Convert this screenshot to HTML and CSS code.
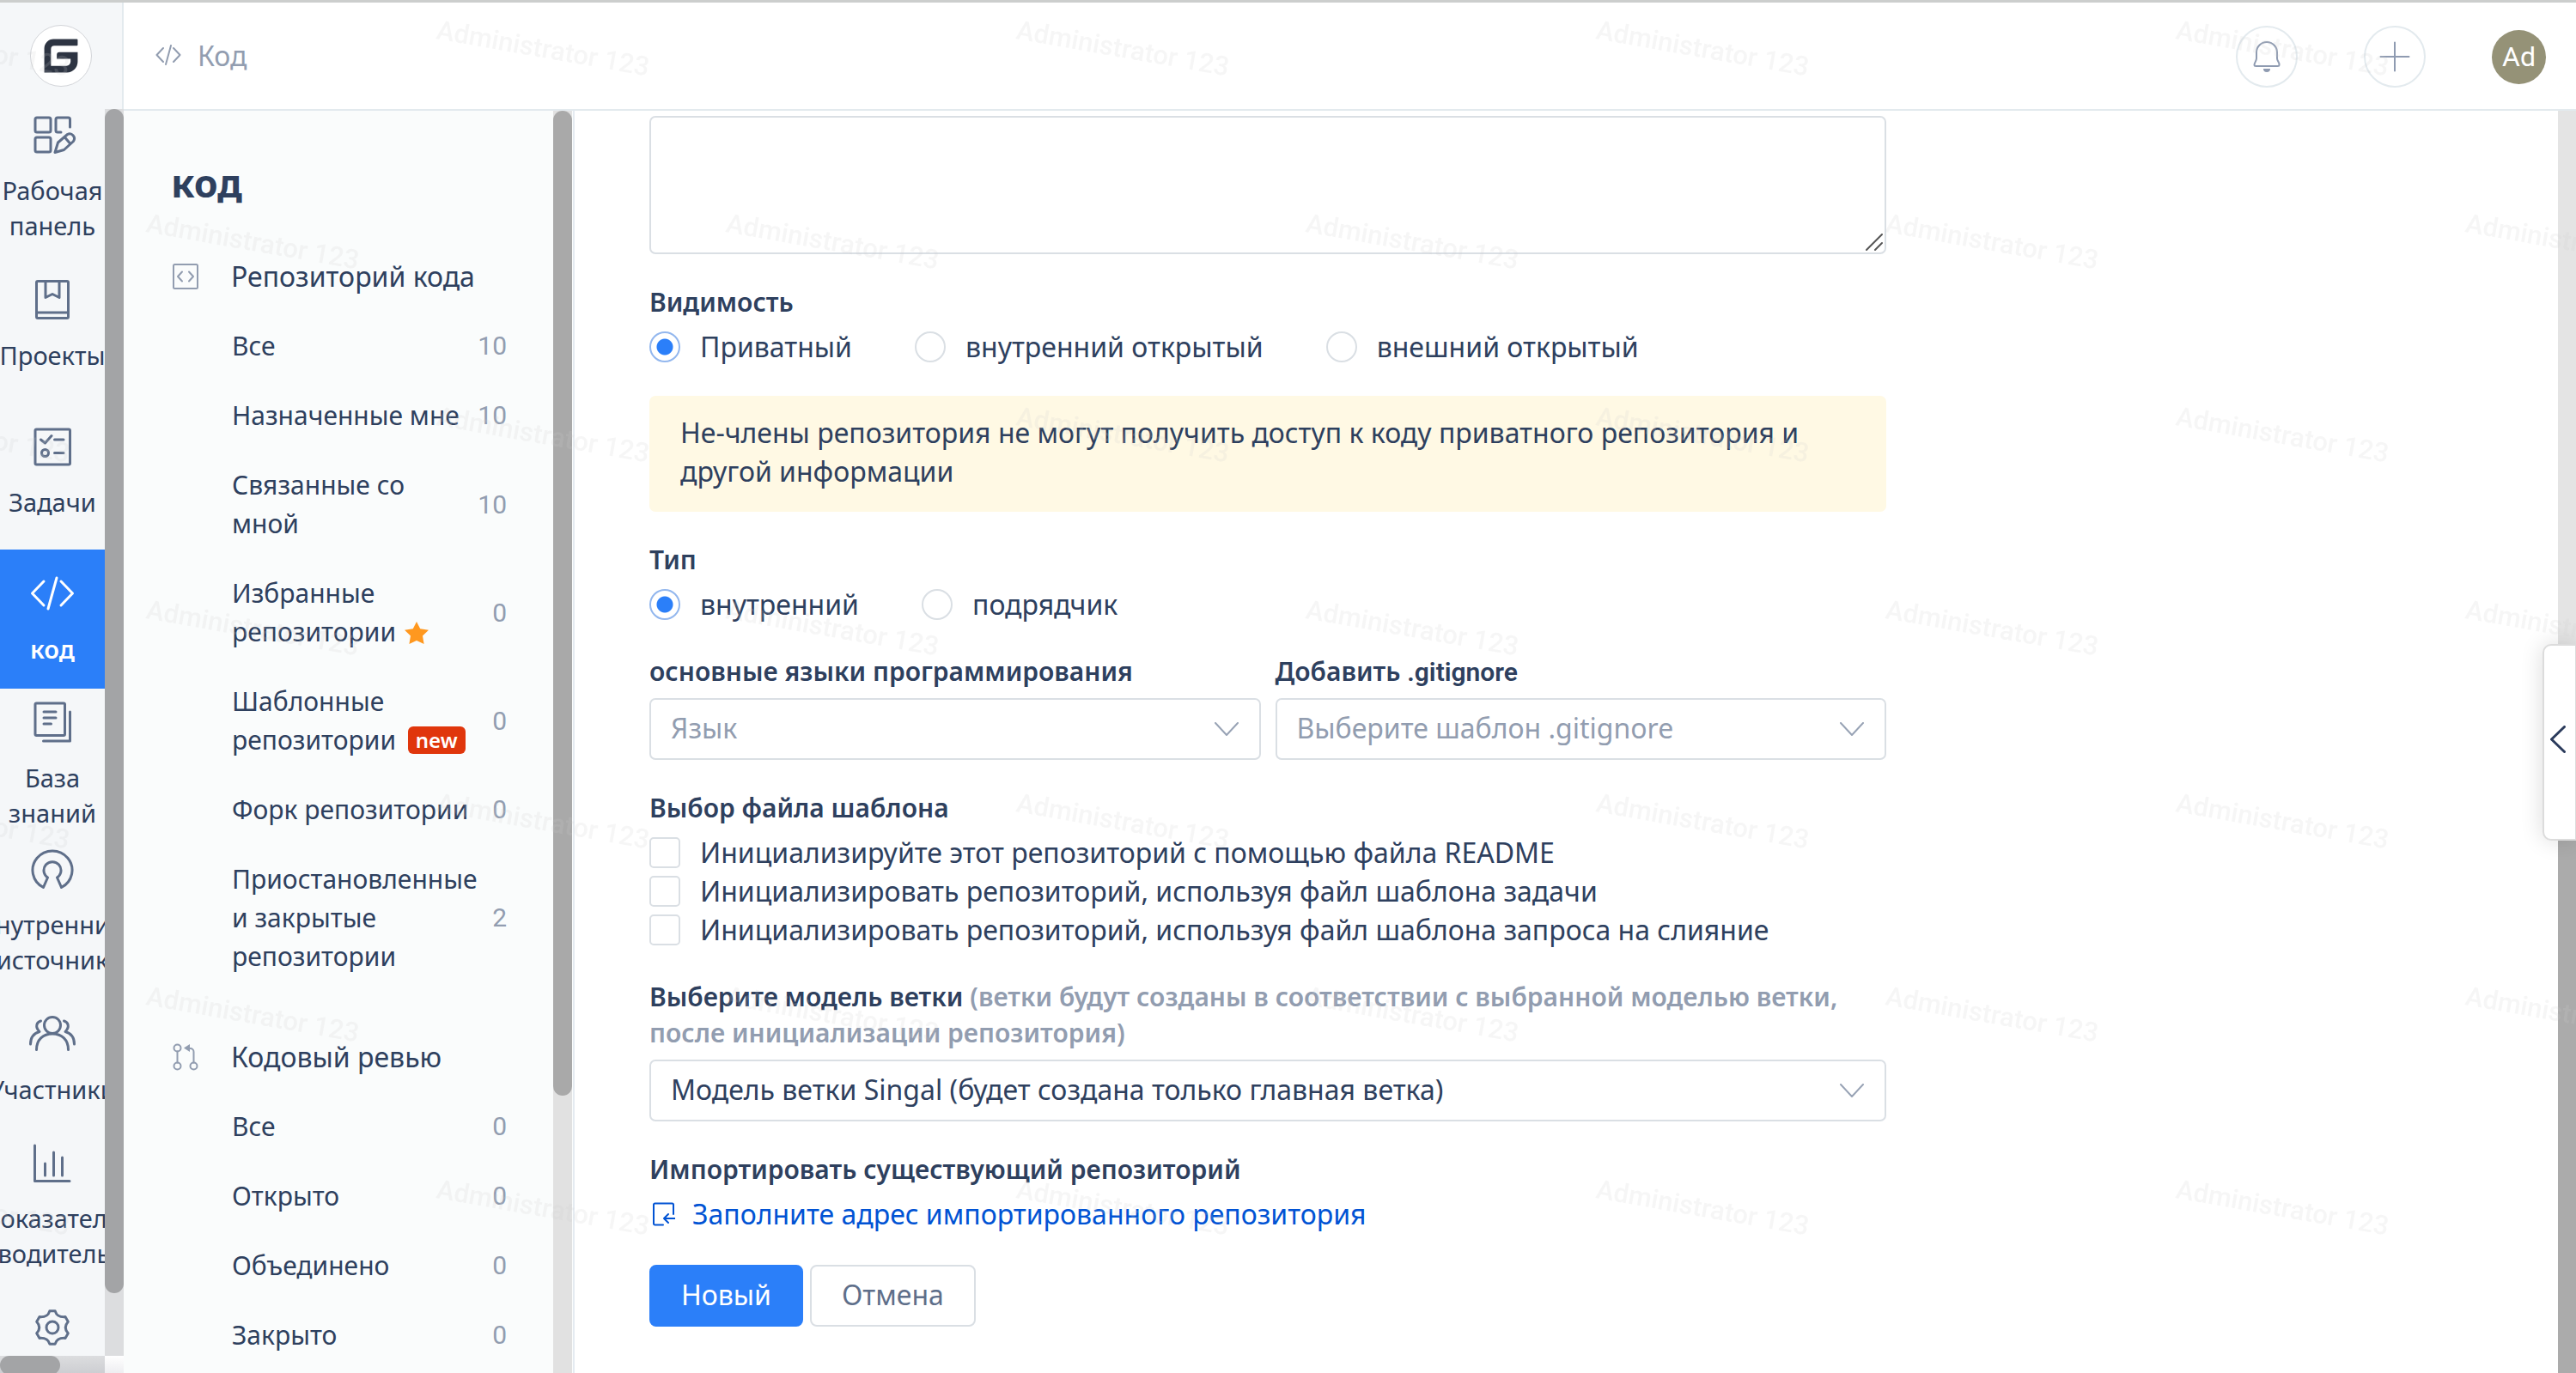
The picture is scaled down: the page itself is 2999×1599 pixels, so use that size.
FILE: index.html
```html
<!DOCTYPE html>
<html lang="ru">
<head>
<meta charset="utf-8">
<title>Код</title>
<link rel="stylesheet" href="styles.css">
</head>
<body>
<div class="app">
  <aside class="rail">
    <div class="rail-head">
      <a class="logo" href="#" aria-label="Главная">
        <svg viewBox="0 0 72 72" width="70" height="70"><path fill="#2d3442" d="M55 16H27a11 11 0 0 0-11 11v29h27a13 13 0 0 0 13-13V31.500H34a3 3 0 0 0-3 3v5h16.500V43a5 5 0 0 1-5 5H24V28a4 4 0 0 1 4-4h27a1 1 0 0 0 1-1v-6a1 1 0 0 0-1-1z"/></svg>
      </a>
    </div>
    <div class="rail-body">
      <nav class="rail-nav">
        <a class="rail-item" href="#"><svg class="icon" viewBox="0 0 52 52"><rect x="6" y="6" width="18" height="17" rx="2"/><rect x="6" y="29" width="18" height="17" rx="2"/><path d="M46.500 17V8a2 2 0 0 0-2-2H32a2 2 0 0 0-2 2v13a2 2 0 0 0 2 2h4"/><path d="M29 46.500l3.500-11.500 11-9.500a5.500 5.500 0 0 1 7 8L39.500 43.500zM40.500 29l6 7"/></svg><span>Рабочая<br>панель</span></a>
        <a class="rail-item" href="#"><svg class="icon" viewBox="0 0 52 52"><rect x="7.500" y="4.500" width="37" height="43" rx="1.500"/><path d="M7.500 41h37M18 5v18.500l8-4 8 4V5"/></svg><span>Проекты</span></a>
        <a class="rail-item" href="#"><svg class="icon" viewBox="0 0 52 52"><rect x="6" y="6" width="40.500" height="41" rx="1.500"/><path d="M12.500 18l5 4 7.500-8.500M28.500 18h10.500M28.500 33.500h10.500"/><circle cx="17.500" cy="33.500" r="4"/></svg><span>Задачи</span></a>
        <a class="rail-item rail-item--active" href="#" aria-current="page"><svg class="icon" viewBox="0 0 52 52"><path d="M16 12L2.500 26 16 40M36 12l13.500 14L36 40M31 8l-10 36"/></svg><span>код</span></a>
        <a class="rail-item" href="#"><svg class="icon" viewBox="0 0 52 52"><rect x="6" y="4" width="34.500" height="37.500" rx="1.500"/><path d="M16 14h14M16 21h14M16 28h8.500M46.500 14v34H15.500"/></svg><span>База<br>знаний</span></a>
        <a class="rail-item" href="#"><svg class="icon" viewBox="0 0 52 52"><path d="M15.500 47.500A23 22.500 0 1 1 36.500 47.500L31.500 36A10 10 0 1 0 20.500 36z"/></svg><span>Внутренний<br>источник</span></a>
        <a class="rail-item" href="#"><svg class="icon" viewBox="0 0 52 52"><circle cx="26" cy="16" r="9.500"/><path d="M7.500 44.500C7.500 33 15 26 26 26s18.500 7 18.500 18.500M12.500 11C7.500 12.500 5.500 18 11 23.500 4 25.500.500 30 .500 38M39.500 11c5 1.500 7 7 1.500 12.500 7 2 10.500 6.500 10.500 14.500"/></svg><span>Участники</span></a>
        <a class="rail-item" href="#"><svg class="icon" viewBox="0 0 52 52"><path d="M5.500 6v41.500H46M17.500 27v14M27.500 14v27M37.500 20v21"/></svg><span>Показатели<br>производительности</span></a>
        <a class="rail-item" href="#"><svg class="icon" viewBox="0 0 52 52"><circle cx="26" cy="26" r="7"/><path d="M22.800 6.800h6.400C31 13 35 14 41 13.600l3.300 5.600C40 24 40 28 44.300 32.800L41 38.400C35 38 31 39 29.200 45.200h-6.400C21 39 17 38 11 38.400l-3.300-5.600C12 28 12 24 7.700 19.200L11 13.600C17 14 21 13 22.800 6.800z"/></svg><span>Настройки</span></a>
      </nav>
      <div class="scroll scroll--rail"><div class="thumb thumb--rail"></div></div>
    </div>
    <div class="rail-foot">
      <div class="hscroll"><div class="hthumb"></div></div>
      <div class="corner"></div>
    </div>
  </aside>

  <div class="page">
    <header class="topbar">
      <a class="crumb" href="#"><svg viewBox="0 0 30 24" width="30" height="24"><path d="M9 4L1.500 12 9 20M21 4l7.500 8-7.500 8M18 1l-6 22"/></svg><span>Код</span></a>
      <div class="tools">
        <button class="round" type="button" aria-label="Уведомления"><svg viewBox="0 0 32 38" width="32" height="38"><path d="M4 21V14a12 12 0 0 1 24 0v7c0 3 3 5 2.500 7.500 0 1-.500 1.500-2 1.500H3.500c-1.500 0-2-.500-2-1.500C1.500 26 4 24 4 21"/><path class="solid" d="M12 33h8a4 4 0 0 1-8 0z"/></svg></button>
        <button class="round" type="button" aria-label="Создать"><svg viewBox="0 0 36 36" width="36" height="36"><path d="M18 1.500v33M1.500 18h33"/></svg></button>
        <button class="avatar" type="button">Ad</button>
      </div>
    </header>

    <div class="body">
      <aside class="side">
        <nav class="side-nav">
          <h2 class="side-title">код</h2>
          <section class="group">
            <a class="group-head" href="#"><svg viewBox="0 0 30 30" width="30" height="30"><rect x="1" y="1" width="28" height="28" rx="1.500"/><path d="M11 9.500L6 15l5 5.500M19 9.500l5 5.500-5 5.500"/></svg><span>Репозиторий кода</span></a>
            <a class="row" href="#"><span class="name">Все</span><span class="count">10</span></a>
            <a class="row" href="#"><span class="name">Назначенные мне</span><span class="count">10</span></a>
            <a class="row" href="#"><span class="name">Связанные со мной</span><span class="count">10</span></a>
            <a class="row" href="#"><span class="name">Избранные репозитории <svg class="star" viewBox="0 0 28 26" width="28" height="26"><path d="M14 0l4.200 8.200L28 9.700l-7 6.800 1.600 9.500L14 22l-8.600 4L7 16.500 0 9.700l9.800-1.500z"/></svg></span><span class="count">0</span></a>
            <a class="row" href="#"><span class="name">Шаблонные репозитории <em class="badge">new</em></span><span class="count">0</span></a>
            <a class="row" href="#"><span class="name">Форк репозитории</span><span class="count">0</span></a>
            <a class="row" href="#"><span class="name">Приостановленные и закрытые репозитории</span><span class="count">2</span></a>
          </section>
          <section class="group">
            <a class="group-head" href="#"><svg viewBox="0 0 30 32" width="30" height="32"><circle cx="5.500" cy="5.500" r="4"/><circle cx="5.500" cy="26.500" r="4"/><circle cx="24.500" cy="26.500" r="4"/><path d="M5.500 9.500v13M24.500 22.500V10a4 4 0 0 0-4-4H18"/><path class="solid" d="M13 5.500L20 1v9z"/></svg><span>Кодовый ревью</span></a>
            <a class="row" href="#"><span class="name">Все</span><span class="count">0</span></a>
            <a class="row" href="#"><span class="name">Открыто</span><span class="count">0</span></a>
            <a class="row" href="#"><span class="name">Объединено</span><span class="count">0</span></a>
            <a class="row" href="#"><span class="name">Закрыто</span><span class="count">0</span></a>
          </section>
        </nav>
        <div class="scroll"><div class="thumb thumb--side"></div></div>
      </aside>

      <main class="main">
        <form class="form">
          <div class="area">
            <textarea aria-label="Описание"></textarea>
            <svg class="grip" viewBox="0 0 20 20" width="20" height="20"><path d="M1 19L19 1M11 19l8-8"/></svg>
          </div>

          <fieldset class="field field--choice">
            <legend class="label">Видимость</legend>
            <div class="radios">
              <label class="choice"><input type="radio" name="vis" checked>Приватный</label>
              <label class="choice"><input type="radio" name="vis">внутренний открытый</label>
              <label class="choice"><input type="radio" name="vis">внешний открытый</label>
            </div>
          </fieldset>

          <p class="notice">Не-члены репозитория не могут получить доступ к коду приватного репозитория и другой информации</p>

          <fieldset class="field field--choice">
            <legend class="label">Тип</legend>
            <div class="radios">
              <label class="choice"><input type="radio" name="type" checked>внутренний</label>
              <label class="choice"><input type="radio" name="type">подрядчик</label>
            </div>
          </fieldset>

          <div class="pair">
            <div class="field">
              <label class="label" for="lang">основные языки программирования</label>
              <div class="pick"><select id="lang" class="empty"><option>Язык</option></select><svg viewBox="0 0 28 17" width="28" height="17"><path d="M1 1l13 14L27 1"/></svg></div>
            </div>
            <div class="field">
              <label class="label" for="ignore">Добавить <span class="latin">.gitignore</span></label>
              <div class="pick"><select id="ignore" class="empty"><option>Выберите шаблон .gitignore</option></select><svg viewBox="0 0 28 17" width="28" height="17"><path d="M1 1l13 14L27 1"/></svg></div>
            </div>
          </div>

          <fieldset class="field">
            <legend class="label">Выбор файла шаблона</legend>
            <div class="checks">
              <label class="choice"><input type="checkbox"><span>Инициализируйте этот репозиторий с помощью файла README</span></label>
              <label class="choice"><input type="checkbox">Инициализировать репозиторий, используя файл шаблона задачи</label>
              <label class="choice"><input type="checkbox">Инициализировать репозиторий, используя файл шаблона запроса на слияние</label>
            </div>
          </fieldset>

          <div class="field">
            <label class="label" for="model">Выберите модель ветки <span class="hint">(ветки будут созданы в соответствии с выбранной моделью ветки, после инициализации репозитория)</span></label>
            <div class="pick"><select id="model"><option>Модель ветки Singal (будет создана только главная ветка)</option></select><svg viewBox="0 0 28 17" width="28" height="17"><path d="M1 1l13 14L27 1"/></svg></div>
          </div>

          <div class="field field--choice">
            <div class="label">Импортировать существующий репозиторий</div>
            <a class="import" href="#"><svg viewBox="0 0 26 28" width="26" height="28"><path d="M12 26.500H2.500a1.500 1.500 0 0 1-1.500-1.500V3a1.500 1.500 0 0 1 1.500-1.500h20A1.500 1.500 0 0 1 24 3v11M25.500 19H13M18 14l-5 5 5 5"/></svg><span>Заполните адрес импортированного репозитория</span></a>
          </div>

          <div class="actions">
            <button class="btn btn--primary" type="submit">Новый</button>
            <button class="btn" type="button">Отмена</button>
          </div>
        </form>
        <div class="scroll scroll--main"><div class="thumb thumb--main"></div></div>
      </main>
    </div>
  </div>
</div>

<button class="drawer" type="button" aria-label="Открыть панель"><svg viewBox="0 0 18 32" width="18" height="32"><path d="M16.500 1.500L1.500 16l15 14.500"/></svg></button>

<svg class="watermark" aria-hidden="true">
  <defs>
    <pattern id="wm" width="675" height="450" patternUnits="userSpaceOnUse">
      <text transform="translate(507 45) rotate(10)">Administrator 123</text>
      <text transform="translate(-168 45) rotate(10)">Administrator 123</text>
      <text transform="translate(169 270) rotate(10)">Administrator 123</text>
    </pattern>
  </defs>
  <rect width="100%" height="100%" fill="url(#wm)"/>
</svg>
</body>
</html>
```
FILE: styles.css
```css
:root {
  --ink: #2e405e;
  --muted: #929db0;
  --icon: #5f6f8a;
  --line: #e3eaee;
  --border: #dadfe4;
  --blue: #2b7ff9;
  --text: "Noto Sans", "Open Sans", sans-serif;
  --latin: Roboto, "Noto Sans", sans-serif;
}

* { box-sizing: border-box; }

body {
  margin: 0;
  color: var(--ink);
  background: #fff;
  font: 32px/45px var(--text);
}

a { color: inherit; text-decoration: none; }
button, select, textarea { font: inherit; color: inherit; }
svg { fill: none; stroke: currentColor; stroke-width: 2; stroke-linecap: round; stroke-linejoin: round; flex: none; }
.solid { fill: currentColor; stroke: none; }
.latin { font-family: var(--latin); line-height: 1; }

.app {
  display: flex;
  height: 100vh;
  border-top: 3px solid #cccecd;
  overflow: hidden;
}

/* Left rail */
.rail {
  flex: none;
  display: flex;
  flex-direction: column;
  width: 144px;
  background: #f5f7f9;
}
.rail-head {
  flex: none;
  display: flex;
  justify-content: center;
  align-items: center;
  height: 124px;
  border-right: 2px solid var(--line);
}
.logo {
  display: flex;
  width: 72px;
  height: 72px;
  border: 1px solid #d3d5d9;
  border-radius: 50%;
  background: #fff;
}
.logo svg { stroke: none; }
.rail-body { flex: 1; display: flex; min-height: 0; }
.rail-nav { flex: 1; min-width: 0; overflow: hidden; }
.rail-item {
  display: flex;
  flex-direction: column;
  align-items: center;
  justify-content: center;
  gap: 18px;
  height: 162px;
  margin-bottom: 9px;
  padding-bottom: 2px;
  font-size: 29px;
  line-height: 41px;
  text-align: center;
  white-space: nowrap;
}
.icon { width: 52px; height: 52px; color: var(--icon); stroke-width: 3; overflow: visible; }
.rail-item--active { background: var(--blue); color: #fff; font-weight: 600; }
.rail-item--active .icon { color: #fff; }
.rail-foot { flex: none; display: flex; height: 20px; }
.hscroll { flex: 1; background: linear-gradient(#dcdddf, #cdced2); }
.hthumb { width: 57%; height: 22px; border-radius: 11px; background: #a3a4a6; }
.corner { width: 22px; background: linear-gradient(#fff, #eeeef1); }

/* Scroll tracks */
.scroll { flex: none; width: 22px; background: #e1e1e1; }
.thumb { border-radius: 11px; background: #a9a9a9; }
.scroll--rail { background: #dcdddf; }
.thumb--rail { height: 95%; background: #a3a4a6; }
.thumb--side { height: 78%; }
.scroll--main { display: flex; flex-direction: column; justify-content: flex-end; width: 21px; background: #e4e4e4; }
.thumb--main { height: 48%; border-radius: 11px 11px 0 0; background: #ababab; }

/* Top bar */
.page { flex: 1; display: flex; flex-direction: column; min-width: 0; }
.topbar {
  flex: none;
  display: flex;
  justify-content: space-between;
  align-items: center;
  height: 126px;
  padding: 0 35px 0 37px;
  border-bottom: 2px solid var(--line);
}
.crumb { display: flex; align-items: center; gap: 19px; padding-bottom: 2px; color: var(--muted); }
.tools { display: flex; align-items: center; gap: 77px; padding-top: 2px; }
.round {
  display: grid;
  place-items: center;
  width: 72px;
  height: 72px;
  padding: 0;
  border: 2px solid var(--line);
  border-radius: 50%;
  background: transparent;
  color: #8f9bb1;
}
.avatar {
  width: 63px;
  height: 63px;
  padding: 0;
  border: 0;
  border-radius: 50%;
  background: #959277;
  color: #fff;
  font-family: var(--latin);
}

/* Section sidebar */
.body { flex: 1; display: flex; min-height: 0; }
.side {
  flex: none;
  display: flex;
  width: 525px;
  padding-right: 1px;
  border-right: 2px solid #e5ebf1;
  background: #fafcfc;
}
.side-nav { flex: 1; min-width: 0; padding: 54px 54px 0 55px; overflow: hidden; }
.side-title { margin: 0 0 38px; font-size: 45px; line-height: 60px; }
.group { margin-bottom: 36px; }
.group-head { display: flex; align-items: center; gap: 38px; padding: 18px 0; }
.group-head svg { color: var(--muted); margin-left: 2px; }
.row {
  display: flex;
  align-items: center;
  gap: 9px;
  padding: 18px 0 18px 71px;
  font-size: 30px;
}
.name { flex: 1; min-width: 0; }
.count { color: var(--muted); font-family: var(--latin); }
.star { margin-left: 2px; vertical-align: -3px; fill: #ff981f; stroke: none; }
.badge {
  display: inline-block;
  margin-left: 6px;
  padding: 0 9px;
  border-radius: 6px;
  background: #e0360c;
  color: #fff;
  font-size: 24px;
  font-style: normal;
  font-weight: 600;
  line-height: 32px;
  vertical-align: 2px;
}

/* Form */
.main { flex: 1; display: flex; justify-content: space-between; min-width: 0; }
.form {
  flex: 0 1 1527px;
  display: flex;
  flex-direction: column;
  gap: 35px;
  min-width: 0;
  padding: 6px 0 0 87px;
}
.area { position: relative; display: flex; }
.area textarea {
  flex: 1;
  height: 161px;
  border: 2px solid var(--border);
  border-radius: 7px;
  background: transparent;
  resize: none;
}
.grip { position: absolute; right: 4px; bottom: 4px; color: #555; }
.field { display: flex; flex-direction: column; gap: 10px; min-width: 0; margin: 0; padding: 0; border: 0; }
.field--choice { gap: 8px; }
.label { display: block; padding: 0; font-size: 30px; font-weight: 600; line-height: 42px; }
fieldset .label { margin-bottom: 8px; }
.hint { color: var(--muted); }
.radios { display: flex; gap: 73px; }
.choice { display: flex; align-items: center; gap: 23px; }
.choice input {
  appearance: none;
  flex: none;
  width: 36px;
  height: 36px;
  margin: 0;
  border: 2px solid var(--border);
  border-radius: 5px;
  background: #fff;
}
.choice input[type="radio"] { border-radius: 50%; }
.choice input[type="radio"]:checked {
  border-color: #93b7ee;
  background: radial-gradient(circle, var(--blue) 9px, #fff 10px);
}
.notice {
  margin: 0;
  padding: 20px 36px 25px;
  border-radius: 7px;
  background: #fff9e4;
}
.pair { display: grid; grid-template-columns: 1fr 1fr; gap: 17px; }
.pick { display: grid; align-items: center; }
.pick > * { grid-area: 1 / 1; }
.pick svg { justify-self: end; margin-right: 26px; color: #98a3b5; pointer-events: none; }
.pick select {
  appearance: none;
  width: 100%;
  height: 72px;
  padding: 0 60px 4px 23px;
  border: 2px solid var(--border);
  border-radius: 7px;
  background: transparent;
}
.pick .empty { color: var(--muted); }
.import { display: flex; align-items: center; gap: 20px; padding-left: 4px; color: #0153d4; }
.actions { display: flex; gap: 8px; margin-top: 2px; }
.btn {
  height: 72px;
  padding: 0 35px 4px;
  border: 2px solid var(--border);
  border-radius: 8px;
  background: #fff;
  color: var(--icon);
}
.btn--primary { border-color: var(--blue); background: var(--blue); color: #fff; }

/* Edge drawer handle */
.drawer {
  position: fixed;
  top: 750px;
  right: 0;
  display: flex;
  align-items: center;
  width: 39px;
  height: 229px;
  padding: 0 0 8px 7px;
  border: 2px solid #dcdcdc;
  border-right-width: 1px;
  border-radius: 10px 0 0 10px;
  background: #fff;
  box-shadow: 0 0 27px rgba(0, 0, 0, .14);
  color: #2b3b5c;
}
.drawer svg { stroke-width: 3; }

.watermark {
  position: fixed;
  inset: 0;
  width: 100%;
  height: 100%;
  pointer-events: none;
}
.watermark text { fill: rgba(205, 205, 205, .18); stroke: none; font: 500 31px var(--latin); }
.watermark rect { stroke: none; }
```
